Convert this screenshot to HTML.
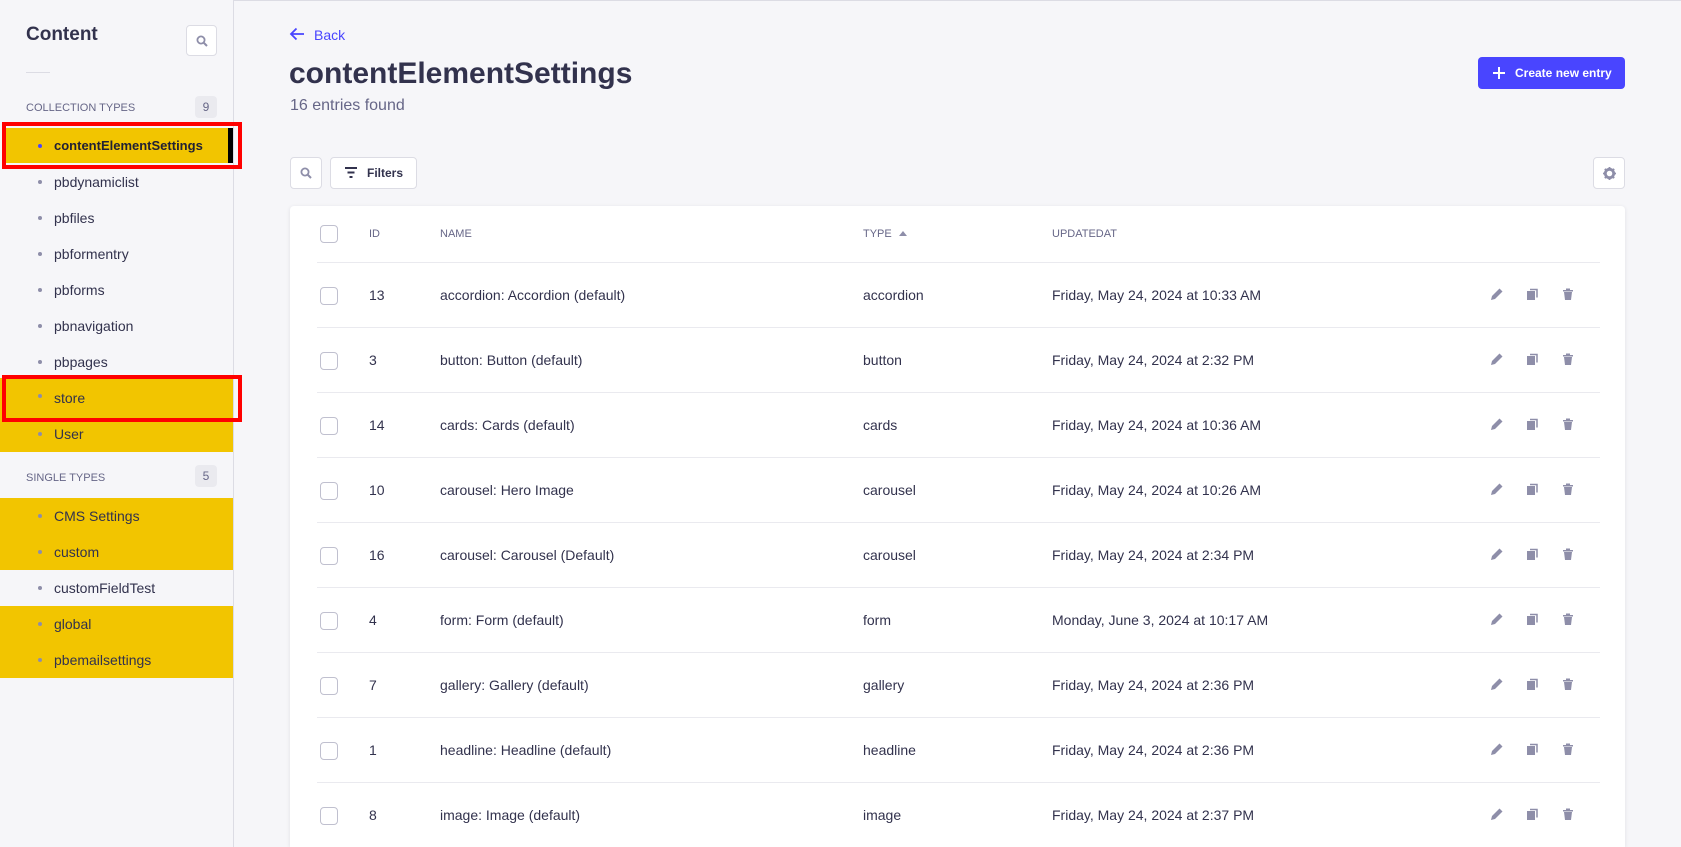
<!DOCTYPE html>
<html><head><meta charset="utf-8"><style>
*{box-sizing:border-box;margin:0;padding:0}
html,body{width:1681px;height:847px;overflow:hidden}
body{background:#f6f6f9;font-family:"Liberation Sans",sans-serif;color:#32324d;position:relative}
.a{position:absolute}
.side{left:0;top:0;width:234px;height:847px;background:#f6f6f9;border-right:1px solid #dcdce4}
.item{position:absolute;left:0;width:233px;height:36px;font-size:14px;line-height:36px;padding-left:54px;color:#32324d}
.item:before{content:"";position:absolute;left:38px;top:16px;width:4px;height:4px;border-radius:50%;background:#8e8ea9}
.yel{background:#f2c500}
.sec{font-size:11px;color:#666687;text-transform:uppercase}
.badge{width:22px;height:22px;border-radius:4px;background:#eaeaef;font-size:12px;color:#666687;text-align:center;line-height:22px}
.btn{background:#fff;border:1px solid #dcdce4;border-radius:4px}
.hd{font-size:11px;color:#666687;top:228px}
.row{position:absolute;left:317px;width:1283px;height:65px;border-top:1px solid #eaeaef}
.cb{position:absolute;left:3px;top:24px;width:18px;height:18px;border:1px solid #c0c0cf;border-radius:4px;background:#fff}
.c{position:absolute;top:0;line-height:64px;font-size:14px;color:#32324d}
.ic{position:absolute;top:24px}
.red{position:absolute;border:4px solid #f00;z-index:5}
</style></head><body>
<div class="a" style="left:0;top:0;width:1681px;height:1px;background:#dcdce4"></div>
<div class="a side"></div>
<div class="a" style="left:26px;top:24px;font-size:19px;font-weight:bold">Content</div>
<div class="a btn" style="left:186px;top:25px;width:31px;height:31px"><svg class="a" style="left:9px;top:9px" width="12" height="12" viewBox="0 0 12 12"><circle cx="5" cy="5" r="3.6" fill="none" stroke="#8e8ea9" stroke-width="1.8"/><path d="M7.5 7.5L11 11" stroke="#8e8ea9" stroke-width="2"/></svg></div>
<div class="a" style="left:26px;top:72px;width:24px;height:1px;background:#dcdce4"></div>
<div class="a sec" style="left:26px;top:102px">Collection types</div>
<div class="a badge" style="left:195px;top:96px">9</div>
<div class="a yel" style="left:6px;top:128px;width:222px;height:35px;padding-left:48px;font-weight:bold;font-size:13px;line-height:35px;color:#212134">contentElementSettings</div>
<div class="a" style="left:228px;top:128px;width:5px;height:35px;background:#000"></div>
<div class="a" style="left:38px;top:144px;width:4px;height:4px;border-radius:50%;background:#4945ff"></div>
<div class="item" style="top:164px">pbdynamiclist</div>
<div class="item" style="top:200px">pbfiles</div>
<div class="item" style="top:236px">pbformentry</div>
<div class="item" style="top:272px">pbforms</div>
<div class="item" style="top:308px">pbnavigation</div>
<div class="item" style="top:344px">pbpages</div>
<div class="item yel" style="top:378px;height:38px;line-height:40px">store</div>
<div class="item yel" style="top:416px;height:36px;line-height:36px">User</div>
<div class="red" style="left:2px;top:122px;width:240px;height:47px"></div>
<div class="red" style="left:2px;top:375px;width:240px;height:47px"></div>
<div class="a sec" style="left:26px;top:472px">Single types</div>
<div class="a badge" style="left:195px;top:465px">5</div>
<div class="item yel" style="top:498px">CMS Settings</div>
<div class="item yel" style="top:534px">custom</div>
<div class="item" style="top:570px">customFieldTest</div>
<div class="item yel" style="top:606px">global</div>
<div class="item yel" style="top:642px">pbemailsettings</div>

<svg class="a" style="left:289px;top:27px" width="16" height="14" viewBox="0 0 16 14"><path d="M15 7H2M7.5 1.5L2 7l5.5 5.5" fill="none" stroke="#4945ff" stroke-width="1.8"/></svg>
<div class="a" style="left:314px;top:27px;font-size:14px;color:#4945ff">Back</div>
<div class="a" style="left:289px;top:57px;font-size:30px;font-weight:bold;color:#32324d">contentElementSettings</div>
<div class="a" style="left:290px;top:97px;font-size:16px;color:#666687">16 entries found</div>
<div class="a" style="left:1478px;top:57px;width:147px;height:32px;background:#4945ff;border-radius:4px;color:#fff;font-size:12px;font-weight:bold;line-height:32px;padding-left:37px">Create new entry</div>
<svg class="a" style="left:1493px;top:67px" width="12" height="12" viewBox="0 0 12 12"><path d="M6 0v12M0 6h12" stroke="#fff" stroke-width="2"/></svg>
<div class="a btn" style="left:290px;top:157px;width:32px;height:32px"><svg class="a" style="left:9px;top:9px" width="12" height="12" viewBox="0 0 12 12"><circle cx="5" cy="5" r="3.6" fill="none" stroke="#8e8ea9" stroke-width="1.8"/><path d="M7.5 7.5L11 11" stroke="#8e8ea9" stroke-width="2"/></svg></div>
<div class="a btn" style="left:330px;top:157px;width:87px;height:32px;font-size:12px;font-weight:bold;line-height:30px;padding-left:36px">Filters</div>
<svg class="a" style="left:345px;top:167px" width="12" height="11" viewBox="0 0 12 11"><path d="M0 1h12M2.5 5.5h7M4.5 10h3" stroke="#32324d" stroke-width="2"/></svg>
<div class="a btn" style="left:1593px;top:157px;width:32px;height:32px"><svg class="a" style="left:9px;top:9px" width="13" height="13" viewBox="0 0 14 14"><circle cx="7" cy="7" r="4.5" fill="none" stroke="#8e8ea9" stroke-width="3"/><path d="M7 0v3M7 11v3M0 7h3M11 7h3M2 2l2 2M10 10l2 2M2 12l2-2M10 4l2-2" stroke="#8e8ea9" stroke-width="2"/></svg></div>

<div class="a" style="left:290px;top:206px;width:1335px;height:641px;background:#fff;border-radius:4px 4px 0 0;box-shadow:0 1px 4px rgba(33,33,52,.1)"></div>
<div class="a cb" style="left:320px;top:225px;position:absolute"></div>
<div class="a hd" style="left:369px">ID</div>
<div class="a hd" style="left:440px">NAME</div>
<div class="a hd" style="left:863px">TYPE</div>
<svg class="a" style="left:899px;top:231px" width="8" height="5"><path d="M0 5L4 0l4 5z" fill="#8e8ea9"/></svg>
<div class="a hd" style="left:1052px">UPDATEDAT</div>

<div id="rows"></div>
<script>
var d=[["13","accordion: Accordion (default)","accordion","Friday, May 24, 2024 at 10:33 AM"],["3","button: Button (default)","button","Friday, May 24, 2024 at 2:32 PM"],["14","cards: Cards (default)","cards","Friday, May 24, 2024 at 10:36 AM"],["10","carousel: Hero Image","carousel","Friday, May 24, 2024 at 10:26 AM"],["16","carousel: Carousel (Default)","carousel","Friday, May 24, 2024 at 2:34 PM"],["4","form: Form (default)","form","Monday, June 3, 2024 at 10:17 AM"],["7","gallery: Gallery (default)","gallery","Friday, May 24, 2024 at 2:36 PM"],["1","headline: Headline (default)","headline","Friday, May 24, 2024 at 2:36 PM"],["8","image: Image (default)","image","Friday, May 24, 2024 at 2:37 PM"]];
var h="";d.forEach(function(r,i){h+='<div class="row" style="top:'+(262+i*65)+'px"><div class="cb"></div><div class="c" style="left:52px">'+r[0]+'</div><div class="c" style="left:123px">'+r[1]+'</div><div class="c" style="left:546px">'+r[2]+'</div><div class="c" style="left:735px">'+r[3]+'</div>'+
'<svg class="ic" style="left:1173px" width="14" height="14" viewBox="0 0 14 14"><path d="M1 13l1-4 7.5-7.5 3 3L5 12z" fill="#8e8ea9"/></svg>'+
'<svg class="ic" style="left:1209px" width="14" height="14" viewBox="0 0 14 14"><rect x="1" y="4" width="8" height="9" fill="#8e8ea9"/><path d="M4 2.5h7v8" fill="none" stroke="#8e8ea9" stroke-width="1.5"/></svg>'+
'<svg class="ic" style="left:1244px" width="14" height="14" viewBox="0 0 14 14"><path d="M2 3h10v1.5H2zM5 1.5h4v1.5H5zM3 5h8l-1 8H4z" fill="#8e8ea9"/></svg></div>'});
document.getElementById("rows").innerHTML=h;
</script>
</body></html>
